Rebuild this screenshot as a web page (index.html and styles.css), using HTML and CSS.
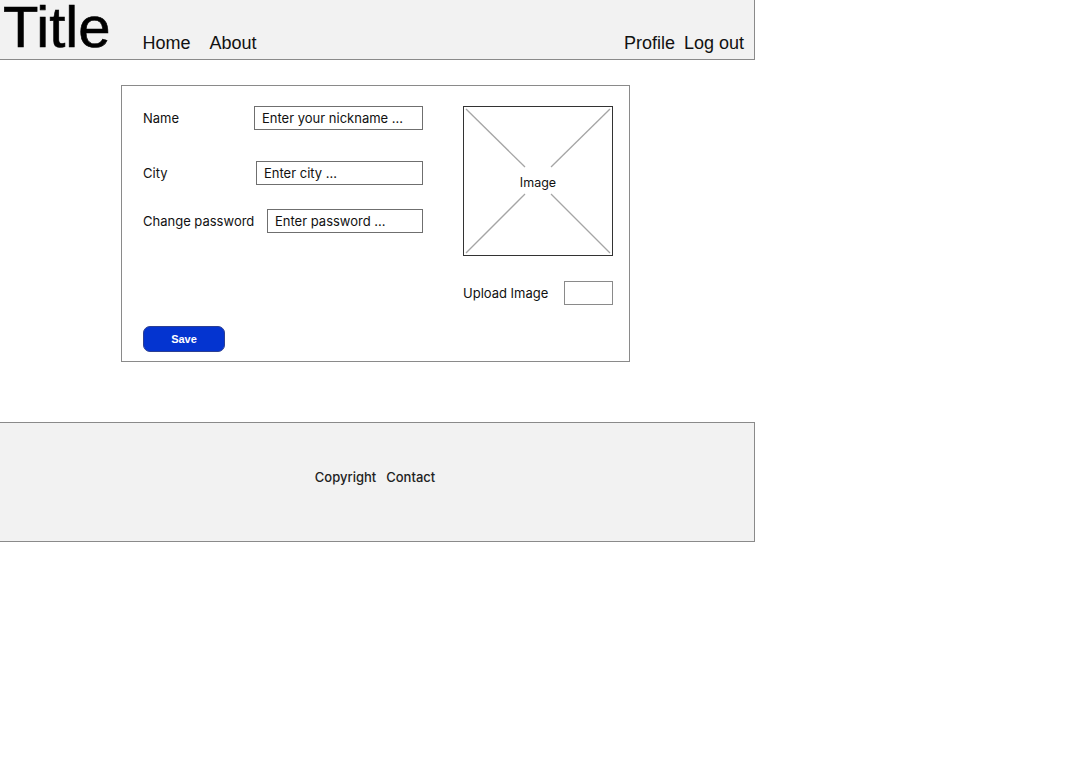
FILE: index.html
```html
<!DOCTYPE html>
<html>
<head>
<meta charset="utf-8">
<link rel="stylesheet" href="styles.css">
</head>
<body>
<header class="topbar">
  <div class="title">Title</div>
  <nav class="nav nav-left"><a>Home</a><a>About</a></nav>
  <nav class="nav nav-right"><a>Profile</a><a>Log out</a></nav>
</header>
<main class="card">
  <div class="fields">
    <div class="row row-name"><label>Name</label><div class="input w-name">Enter your nickname ...</div></div>
    <div class="row row-city"><label>City</label><div class="input w-city">Enter city ...</div></div>
    <div class="row row-pass"><label>Change password</label><div class="input w-pass">Enter password ...</div></div>
  </div>
  <div class="side">
    <div class="image">
      <svg class="cross" width="148" height="148" viewBox="0 0 148 148">
        <line x1="2" y1="2" x2="61" y2="60"/>
        <line x1="146" y1="2" x2="87" y2="60"/>
        <line x1="2" y1="146" x2="61" y2="87"/>
        <line x1="146" y1="146" x2="87" y2="87"/>
      </svg>
      <span class="image-label">Image</span>
    </div>
    <div class="upload"><label>Upload Image</label><div class="upload-box"></div></div>
  </div>
  <div class="actions"><button class="save">Save</button></div>
</main>
<footer class="footer"><span>Copyright</span><span>Contact</span></footer>
</body>
</html>
```
FILE: styles.css
```css
* { box-sizing: border-box; }
body { margin: 0; background: #fff; color: #111; font-family: Inter, "Liberation Sans", sans-serif; }

.topbar {
  width: 755px;
  height: 60px;
  background: #f2f2f2;
  border-right: 1px solid #8a8a8a;
  border-bottom: 1px solid #8a8a8a;
  display: flex;
  align-items: flex-start;
  font-family: "Liberation Sans", Arial, sans-serif;
}
.title {
  font-size: 58px;
  line-height: 53px;
  padding-left: 3px;
  color: #000;
  -webkit-text-stroke: 0.6px #000;
}
.nav { display: flex; margin-top: 33px; font-size: 18px; line-height: 20px; }
.nav a { color: #111; }
.nav-left { margin-left: 32px; gap: 19px; }
.nav-right { margin-left: auto; margin-right: 10px; gap: 9px; }

.card {
  margin: 25px 0 0 121px;
  width: 509px;
  height: 277px;
  border: 1px solid #8a8a8a;
  padding: 20px 16px 0 21px;
  display: grid;
  grid-template-columns: 280px 150px;
  column-gap: 40px;
  grid-template-rows: auto auto;
  align-content: start;
  font-size: 13px;
}
.fields { display: flex; flex-direction: column; }
.row { display: flex; justify-content: space-between; align-items: center; height: 24px; }
.row-city { margin-top: 31px; }
.row-pass { margin-top: 24px; }
.input {
  height: 24px;
  border: 1px solid #6f6f6f;
  padding: 0 0 0 7px;
  line-height: 22px;
  color: #111;
  white-space: nowrap;
}
.w-name { width: 169px; }
.w-city { width: 167px; }
.w-pass { width: 156px; }

.side { display: flex; flex-direction: column; }
.image {
  width: 150px; height: 150px;
  border: 1px solid #333;
  position: relative;
  display: flex; align-items: center; justify-content: center;
}
.cross { position: absolute; left: 0; top: 0; }
.cross line { stroke: #a5a5a5; stroke-width: 1.3; }
.image-label { position: relative; font-size: 12.5px; margin-top: 2px; }
.upload { margin-top: 25px; display: flex; justify-content: space-between; align-items: center; height: 24px; }
.upload-box { width: 49px; height: 24px; border: 1px solid #8a8a8a; }

.actions { grid-column: 1 / 3; margin-top: 21px; }
.save {
  display: block;
  width: 82px; height: 26px;
  background: #0434d0;
  border: 1px solid #2c3f93;
  border-radius: 7px;
  color: #fff;
  font-family: "Liberation Sans", Arial, sans-serif;
  font-weight: bold;
  font-size: 11px;
  padding: 0;
}

.footer {
  margin-top: 60px;
  width: 755px;
  height: 120px;
  background: #f2f2f2;
  border-top: 1px solid #8a8a8a;
  border-right: 1px solid #8a8a8a;
  border-bottom: 1px solid #8a8a8a;
  display: flex;
  justify-content: center;
  gap: 10px;
  padding-top: 46px;
  padding-right: 4px;
  font-size: 13px;
  line-height: 16px;
  font-weight: 500;
  color: #222;
}
```
